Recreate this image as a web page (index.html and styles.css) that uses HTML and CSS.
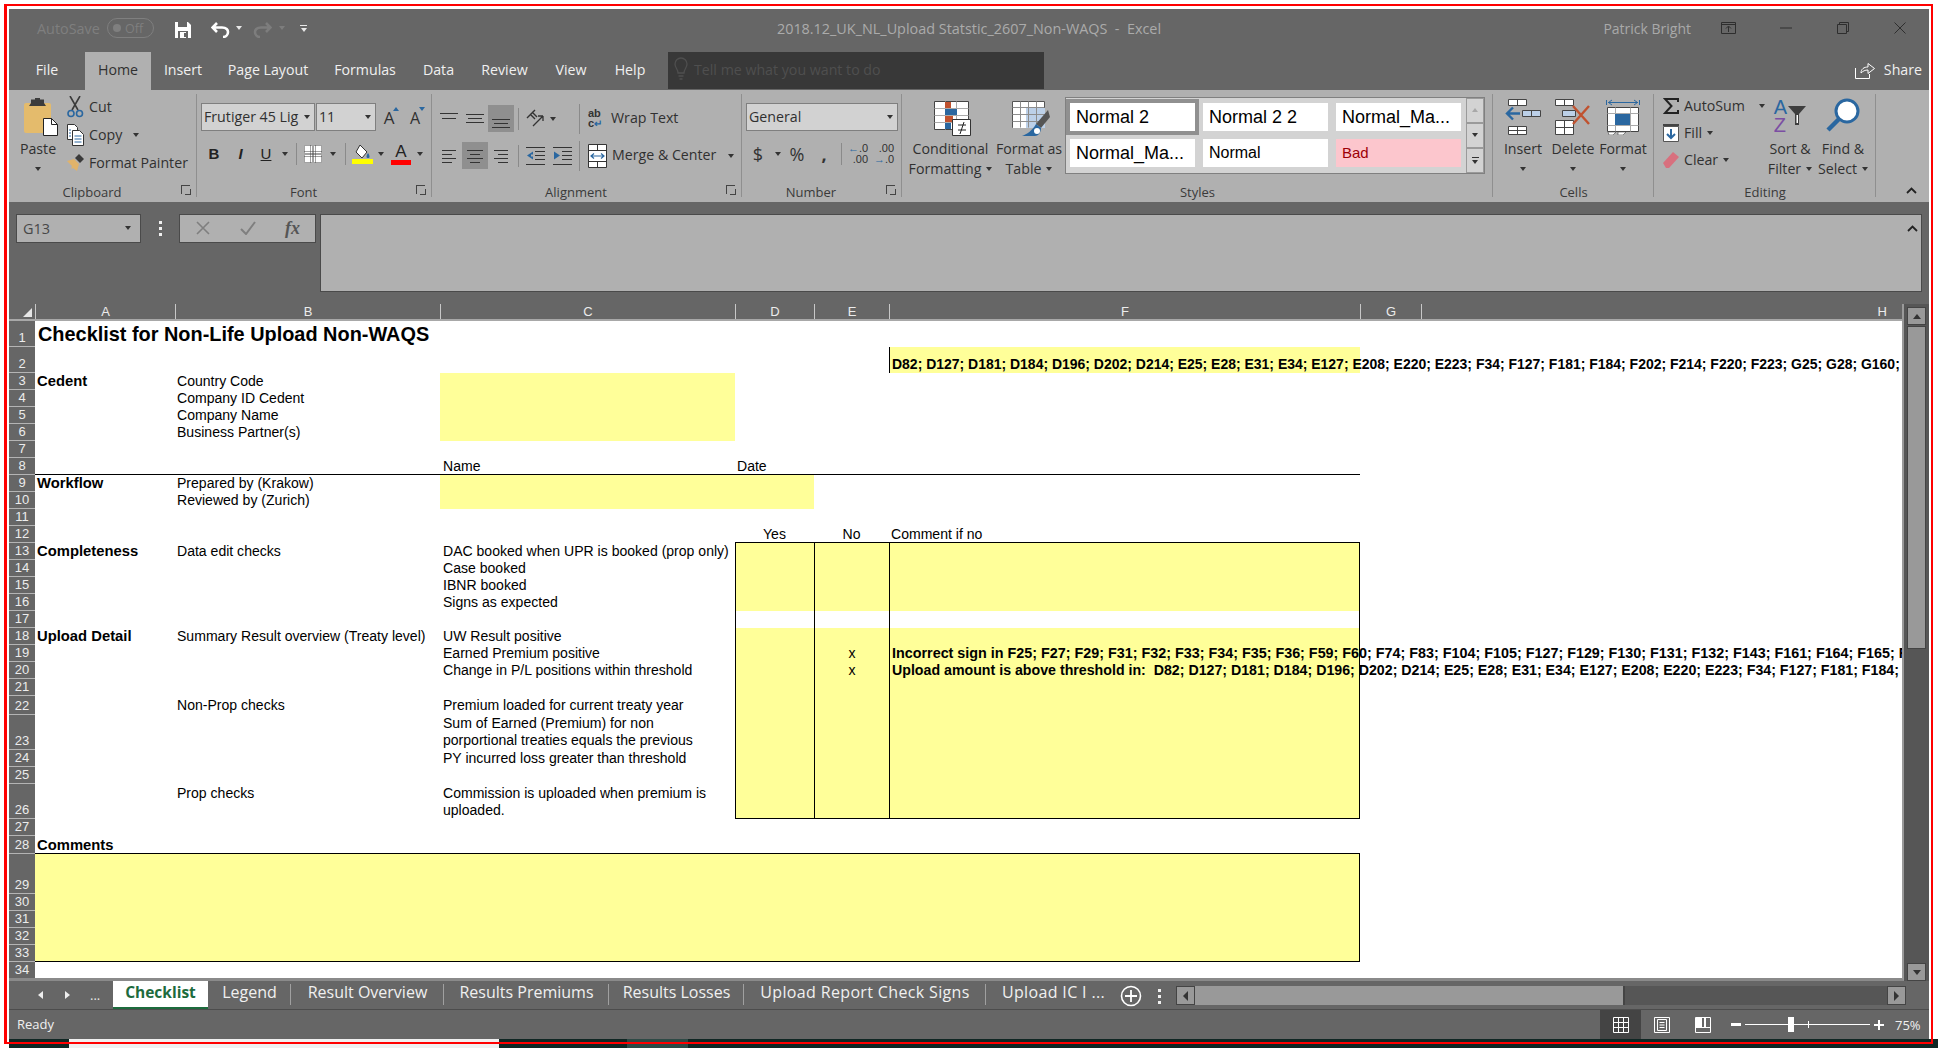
FILE: index.html
```html
<!DOCTYPE html>
<html lang="en">
<head>
<meta charset="UTF-8">
<meta name="viewport" content="width=device-width, initial-scale=1.0">
<title>2018.12_UK_NL_Upload Statstic_2607_Non-WAQS - Excel</title>
<link rel="stylesheet" href="styles.css">
</head>
<body>

<div class="window">

  <!-- title bar -->
  <div class="titlebar">
    <div class="qat">
      <span class="autosave">AutoSave</span>
      <span class="toggle"><i class="toggle-dot"></i>Off</span>
      <svg class="qat-save" width="16" height="16" viewBox="0 0 16 16"><path d="M0 0h13l3 3v13H0z" fill="#fff"/><path d="M3 0h9v5H3z" fill="#666"/><path d="M3 9h10v7H3z" fill="#666"/><path d="M5 10h6v6H5z" fill="#fff"/><path d="M9 11h2v4H9z" fill="#666"/></svg>
      <svg class="qat-undo" width="19" height="16" viewBox="0 0 19 16"><path d="M6 1 1.500 5.500 6 10M2 5.500h9c4.500 0 6 2.500 6 4.500s-1.500 5-5 5" fill="none" stroke="#fff" stroke-width="2.600"/></svg>
      <i class="caret caret-light qat-caret1"></i>
      <svg class="qat-redo" width="19" height="16" viewBox="0 0 19 16"><path d="M13 1l4.500 4.500L13 10M17 5.500H8C3.500 5.500 2 8 2 10s1.500 5 5 5" fill="none" stroke="#7d7d7d" stroke-width="2.600"/></svg>
      <i class="caret caret-dim qat-caret2"></i>
      <span class="qat-more"><i class="bar"></i><i class="caret caret-light"></i></span>
    </div>
    <div class="doc-title">2018.12_UK_NL_Upload Statstic_2607_Non-WAQS &nbsp;-&nbsp; Excel</div>
    <div class="win-controls">
      <span class="user">Patrick Bright</span>
      <svg class="ctl-display" width="15" height="12" viewBox="0 0 15 12"><path d="M.5.500h14v11H.5zM.5 2.500h14M7.500 10V4.500M5 6.500l2.500-2.500L10 6.500" fill="none" stroke="#2e2e2e"/></svg>
      <svg class="ctl-min" width="12" height="12" viewBox="0 0 12 12"><path d="M0 6h12" stroke="#2e2e2e"/></svg>
      <svg class="ctl-max" width="12" height="12" viewBox="0 0 12 12"><path d="M.5 2.500h9v9h-9zM2.500 2.500v-2h9v9h-2" fill="none" stroke="#2e2e2e"/></svg>
      <svg class="ctl-close" width="12" height="12" viewBox="0 0 12 12"><path d="M.5.500l11 11M11.500.500l-11 11" stroke="#2e2e2e"/></svg>
    </div>
  </div>

  <!-- ribbon tabs -->
  <div class="tabrow">
    <div class="ribbon-tabs">
      <span class="rtab">File</span>
      <span class="rtab rtab-active">Home</span>
      <span class="rtab">Insert</span>
      <span class="rtab">Page Layout</span>
      <span class="rtab">Formulas</span>
      <span class="rtab">Data</span>
      <span class="rtab">Review</span>
      <span class="rtab">View</span>
      <span class="rtab">Help</span>
    </div>
    <div class="tellme">
      <svg width="14" height="24" viewBox="0 0 14 24"><path d="M4 16c0-4-3-5-3-9a6 6 0 0 1 12 0c0 4-3 5-3 9zM4.500 19h5M5.500 22h3" fill="none" stroke="#4f4f4f" stroke-width="1.300"/></svg>
      <span>Tell me what you want to do</span>
    </div>
    <div class="share">
      <svg width="20" height="18" viewBox="0 0 20 18"><path d="M.5 7v10.500h14V13M6 12c0-4 3-6 7-6V2.500L19.500 7.500 13 12.500V9c-3 0-5 1-7 3z" fill="none" stroke="#fff"/></svg>
      <span>Share</span>
    </div>
  </div>

  <!-- ribbon -->
  <div class="ribbon">

    <div class="group g-clipboard">
      <div class="group-body clip-body">
        <div class="big paste">
          <div class="big-icon">
            <svg width="35" height="38" viewBox="0 0 35 38"><rect x="1" y="5" width="27" height="30" rx="2" fill="#e4bb6c"/><path d="M8 5V1.500h4V0h5v1.500h4V5l2 3H6z" fill="#3c3c3c"/><path d="M20.500 20.500h8l6 6v11h-14z" fill="#fff" stroke="#222"/><path d="M28.500 20.500v6h6" fill="none" stroke="#222"/></svg>
          </div>
          <span class="paste-label">Paste</span>
          <i class="caret caret-under paste-label"></i>
        </div>
        <div class="clip-rows">
          <div class="clip-row">
            <svg width="17" height="22" viewBox="0 0 17 22"><path d="M3 0l8 14M13 0L5 14" stroke="#3a3a3a" stroke-width="1.600" fill="none"/><circle cx="4" cy="17.500" r="3" fill="none" stroke="#2a67a0" stroke-width="1.600"/><circle cx="12.500" cy="17.500" r="3" fill="none" stroke="#2a67a0" stroke-width="1.600"/></svg>
            <span>Cut</span>
          </div>
          <div class="clip-row">
            <svg width="17" height="22" viewBox="0 0 17 22"><path d="M.5.500h7l3 3v12H.5z" fill="#fff" stroke="#333"/><path d="M5.500 6.500h7l4 4v11h-11z" fill="#fff" stroke="#333"/><path d="M2 6h2M2 9h2M2 12h2M7.500 12h7M7.500 15h7M7.500 18h7" stroke="#2a67a0"/></svg>
            <span>Copy</span><i class="caret copy-caret"></i>
          </div>
          <div class="clip-row">
            <svg width="17" height="18" viewBox="0 0 17 18"><path d="M0 7l7-2 5 5-2 7-4-3-2 1 1-3z" fill="#e1b36a"/><path d="M8 4l4-4 5 5-4 4z" fill="#3a3a3a"/></svg>
            <span>Format Painter</span>
          </div>
        </div>
      </div>
      <div class="group-label has-launcher"><span>Clipboard</span><i class="launcher"></i></div>
    </div>

    <div class="group g-font">
      <div class="group-body two-rows">
        <div class="font-row1">
          <div class="select select-font"><span>Frutiger 45 Lig</span><i class="caret"></i></div>
          <div class="select select-size"><span>11</span><i class="caret"></i></div>
          <span class="font-size-btn">A<i class="tri tri-up"></i></span>
          <span class="font-size-btn font-size-small">A<i class="tri tri-down"></i></span>
        </div>
        <div class="font-row2">
          <b class="fmt fmt-b">B</b>
          <i class="fmt fmt-i">I</i>
          <u class="fmt">U</u>
          <i class="caret"></i>
          <i class="sep"></i>
          <svg width="18" height="18" viewBox="0 0 18 18"><rect width="18" height="18" fill="#fff"/><path d="M.5.500h17v17H.5zM6.500.500v17M11.500.500v17M.5 6.500h17M.5 11.500h17" fill="none" stroke="#444" stroke-dasharray="1 1"/><path d="M9 1v16M1 9h16" stroke="#444"/></svg>
          <i class="caret"></i>
          <i class="sep"></i>
          <svg width="21" height="20" viewBox="0 0 21 20"><path d="M8 1l7 7-5 6-6-6z" fill="#fff" stroke="#333"/><path d="M16 9c2 3 2 5 0 5s-2-2 0-5z" fill="#2a67a0"/><rect y="15" width="21" height="5" fill="#ffff00"/></svg>
          <i class="caret"></i>
          <span class="color-a">A</span>
          <i class="caret"></i>
        </div>
      </div>
      <div class="group-label has-launcher"><span>Font</span><i class="launcher"></i></div>
    </div>

    <div class="group g-align">
      <div class="group-body two-rows">
        <div class="align-row1">
          <span class="al"><svg width="18" height="12" viewBox="0 0 18 12"><path d="M0 .500h18M2 5.500h14" stroke="#333"/></svg></span>
          <span class="al"><svg width="18" height="12" viewBox="0 0 18 12"><path d="M0 1.500h18M2 5.500h14M0 9.500h18" stroke="#333"/></svg></span>
          <span class="al al-on al-bottom"><svg width="18" height="12" viewBox="0 0 18 12"><path d="M0 3.500h18M2 7.500h14M0 11.500h18" stroke="#333"/></svg></span>
          <i class="sep"></i>
          <svg width="19" height="19" viewBox="0 0 19 19"><path d="M1 9l8-8M4 5l5 5M6 3l5 5" stroke="#333" stroke-width="1.400" fill="none"/><path d="M7 17l10-10M17 7v5M17 7h-5" stroke="#333" stroke-width="1.300" fill="none"/></svg>
          <i class="caret"></i>
          <span></span>
          <i class="sep sep-tall"></i>
          <div class="al-wide">
            <span class="wrap-icon"><span>ab</span><span>c<i class="wrap-arrow">↵</i></span></span>
            <span class="al-text">Wrap Text</span>
          </div>
        </div>
        <div class="align-row2">
          <span class="al"><svg width="14" height="14" viewBox="0 0 14 14"><path d="M0 1.500h14M0 5.500h10M0 9.500h14M0 13.500h10" stroke="#333"/></svg></span>
          <span class="al al-on"><svg width="16" height="14" viewBox="0 0 16 14"><path d="M0 1.500h16M3 5.500h10M0 9.500h16M3 13.500h10" stroke="#333"/></svg></span>
          <span class="al"><svg width="14" height="14" viewBox="0 0 14 14"><path d="M0 1.500h14M4 5.500h10M0 9.500h14M4 13.500h10" stroke="#333"/></svg></span>
          <i class="sep"></i>
          <svg width="19" height="18" viewBox="0 0 19 18"><path d="M0 .500h19M0 17.500h19M9 4.500h10M9 8.500h10M9 12.500h10" stroke="#333"/><path d="M7 4.500L1 8.500l6 4zM5 7.500h2v2H5z" fill="#2a67a0"/></svg>
          <svg width="19" height="18" viewBox="0 0 19 18"><path d="M0 .500h19M0 17.500h19M9 4.500h10M9 8.500h10M9 12.500h10" stroke="#333"/><path d="M1 4.500l6 4-6 4z" fill="#2a67a0"/></svg>
          <i class="sep sep-tall"></i>
          <div class="al-wide">
            <svg width="19" height="24" viewBox="0 0 19 24"><path d="M.5.500h18v23H.5z" fill="#fff" stroke="#333"/><path d="M.5 6.500h18M.5 17.500h18M9.500.500v6M9.500 17.500v6" stroke="#333"/><path d="M3 12h13M6 9.500L3 12l3 2.500M13 9.500l3 2.500-3 2.500" fill="none" stroke="#2a67a0" stroke-width="1.200"/></svg>
            <span class="al-text">Merge &amp; Center</span><i class="caret merge-caret"></i>
          </div>
        </div>
      </div>
      <div class="group-label has-launcher"><span>Alignment</span><i class="launcher"></i></div>
    </div>

    <div class="group g-number">
      <div class="group-body two-rows">
        <div class="select select-number"><span>General</span><i class="caret"></i></div>
        <div class="number-row">
          <span class="num-sym">$</span>
          <i class="caret"></i>
          <span class="num-sym">%</span>
          <span class="num-sym num-comma">,</span>
          <i class="sep"></i>
          <span class="dec"><span><em>←</em>.0</span><span>.00</span></span>
          <span class="dec"><span>.00</span><span><em>→</em>.0</span></span>
        </div>
      </div>
      <div class="group-label has-launcher"><span>Number</span><i class="launcher"></i></div>
    </div>

    <div class="group g-styles">
      <div class="group-body styles-body">
        <div class="big big-cond">
          <div class="big-icon">
            <svg width="37" height="35" viewBox="0 0 37 35"><path d="M.5.500h34v28H.500z" fill="#fff" stroke="#444"/><path d="M11.500.500v28M22.500.500v28M.5 7.500h34M.5 14.500h34M.5 21.500h34" stroke="#aaa"/><path d="M11 1h6v6h-6z" fill="#c0522f"/><path d="M11 8h12v6H11z" fill="#2a67a0"/><path d="M11 15h8v6h-8z" fill="#c0522f"/><path d="M11 22h6v6h-6z" fill="#2a67a0"/><path d="M18.500 18.500h18v16h-18z" fill="#fff" stroke="#333"/><path d="M24 24h8M24 29h8M26 33l4-12" stroke="#222" fill="none"/></svg>
          </div>
          <span>Conditional</span>
          <span>Formatting<i class="caret caret-inline"></i></span>
        </div>
        <div class="big big-table">
          <div class="big-icon">
            <svg width="38" height="35" viewBox="0 0 38 35"><path d="M.5.500h32v26H.500z" fill="#fff" stroke="#555"/><path d="M1 7h32v20H1z" fill="#fff"/><path d="M14 7h19v20H14z" fill="#bcd0e8"/><path d="M8.500.500v26M16.500.500v26M24.500.500v26M.5 6.500h32M.5 13.500h32M.5 20.500h32" stroke="#8d8d8d"/><path d="M36 9l2 7-9 11-5-4z" fill="#555"/><path d="M24 23l5 4c0 5-3 8-6 8H10c5-2 10-5 14-12z" fill="#2a67a0"/><circle cx="25" cy="30" r="3" fill="#fff"/></svg>
          </div>
          <span>Format as</span>
          <span>Table<i class="caret caret-inline"></i></span>
        </div>
        <div class="gallery">
          <div class="gallery-grid">
            <div class="style-cell style-selected">Normal 2</div>
            <div class="style-cell">Normal 2 2</div>
            <div class="style-cell">Normal_Ma...</div>
            <div class="style-cell">Normal_Ma...</div>
            <div class="style-cell style-plain">Normal</div>
            <div class="style-cell style-bad">Bad</div>
          </div>
          <div class="gallery-scroll">
            <span class="gal-btn"><i class="tri-gal tri-gal-up"></i></span>
            <span class="gal-btn"><i class="tri-gal"></i></span>
            <span class="gal-btn gal-more"><i class="bar"></i><i class="tri-gal"></i></span>
          </div>
        </div>
      </div>
      <div class="group-label"><span>Styles</span></div>
    </div>

    <div class="group g-cells">
      <div class="group-body cells-body">
        <div class="big big-cell">
          <div class="big-icon">
            <svg width="36" height="36" viewBox="0 0 36 36"><path d="M3.500.500h18v6h-18zM12.500.500v6M3.500 27.500h18v8h-18zM3.500 31.500h18M12.500 27.500v8" fill="#fff" stroke="#444"/><path d="M17.500 11.500h18v6h-18z" fill="#bcd0e8" stroke="#444"/><path d="M26.500 11.500v6" stroke="#444"/><path d="M15 14.500H2M8 8.500l-6 6 6 6" fill="none" stroke="#2a67a0" stroke-width="2.400"/></svg>
          </div>
          <span>Insert</span>
          <i class="caret caret-under"></i>
        </div>
        <div class="big big-cell">
          <div class="big-icon">
            <svg width="36" height="36" viewBox="0 0 36 36"><path d="M.5.500h18v6H.5zM9.500.500v6M.5 21.500h18v14H.500zM.5 28.500h18M9.500 21.500v14" fill="#fff" stroke="#444"/><path d="M7.500 11.500h13v6h-13z" fill="#bcd0e8" stroke="#444"/><path d="M18 7l16 18M34 7L18 25" stroke="#c0522f" stroke-width="2.400"/></svg>
          </div>
          <span>Delete</span>
          <i class="caret caret-under"></i>
        </div>
        <div class="big big-cell">
          <div class="big-icon">
            <svg width="34" height="36" viewBox="0 0 34 36"><path d="M.5 1v5M33.500 1v5M2 3.500h30M6 1l-3.500 2.500L6 6M28 1l3.500 2.500L28 6" fill="none" stroke="#2a67a0"/><path d="M1.500 8.500h31v24h-31z" fill="#fff" stroke="#444"/><path d="M9.500 8.500v24M24.500 8.500v24M1.500 14.500h31M1.500 26.500h31" stroke="#aaa"/><path d="M9 15h15v11H9z" fill="#2a67a0"/><path d="M2 33h8l-3 3H3zM12 33h8l-3 3h-5z" fill="#fff" stroke="#444" stroke-width=".600"/></svg>
          </div>
          <span>Format</span>
          <i class="caret caret-under"></i>
        </div>
      </div>
      <div class="group-label"><span>Cells</span></div>
    </div>

    <div class="group g-editing">
      <div class="group-body editing-body">
        <div class="edit-rows">
          <div class="edit-row">
            <svg width="15" height="16" viewBox="0 0 15 16"><path d="M14.500 4V1H1.500L8 8l-6.500 7h13v-3" fill="none" stroke="#222" stroke-width="2"/></svg>
            <span>AutoSum</span><i class="caret sum-caret"></i>
          </div>
          <div class="edit-row">
            <svg width="16" height="18" viewBox="0 0 16 18"><path d="M0 0h16v2H0z" fill="#444"/><path d="M.5 2.500h15v15H.500z" fill="#fff" stroke="#555"/><path d="M8 5v9M4 10l4 4 4-4" fill="none" stroke="#2a67a0" stroke-width="2"/></svg>
            <span>Fill</span><i class="caret"></i>
          </div>
          <div class="edit-row">
            <svg width="16" height="16" viewBox="0 0 16 16"><path d="M0 11L10 0l6 5-10 11H3z" fill="#d8707e"/></svg>
            <span>Clear</span><i class="caret"></i>
          </div>
        </div>
        <div class="big big-sort">
          <div class="big-icon">
            <div class="sort-icon">
              <span class="sort-az"><span class="sort-a">A</span><span class="sort-z">Z</span></span>
              <svg width="18" height="19" viewBox="0 0 18 19"><path d="M0 0h18L11 8v11H7V8z" fill="#3e3e3e"/><path d="M8.500 9h1.500v8H8.500z" fill="#fff"/></svg>
            </div>
          </div>
          <span>Sort &amp;</span>
          <span>Filter<i class="caret caret-inline"></i></span>
        </div>
        <div class="big big-find">
          <div class="big-icon">
            <svg width="34" height="34" viewBox="0 0 34 34"><circle cx="21" cy="13" r="11" fill="#fff" stroke="#2a67a0" stroke-width="3"/><path d="M13 21L2 32" stroke="#2a67a0" stroke-width="4.500"/></svg>
          </div>
          <span>Find &amp;</span>
          <span>Select<i class="caret caret-inline"></i></span>
        </div>
      </div>
      <div class="group-label"><span>Editing</span></div>
    </div>

    <div class="collapse">
      <svg width="11" height="7" viewBox="0 0 11 7"><path d="M1 6l4.500-4.500L10 6" fill="none" stroke="#222" stroke-width="1.800"/></svg>
    </div>
  </div>

  <!-- formula bar -->
  <div class="formula-bar">
    <div class="name-box"><span>G13</span><i class="caret"></i></div>
    <div class="grip"><i></i><i></i><i></i></div>
    <div class="fx-box">
      <svg width="14" height="14" viewBox="0 0 14 14"><path d="M1 1l12 12M13 1L1 13" stroke="#7f7f7f" stroke-width="1.600"/></svg>
      <svg width="16" height="14" viewBox="0 0 16 14"><path d="M1 8l5 5 9-12" fill="none" stroke="#7f7f7f" stroke-width="2"/></svg>
      <span class="fx">fx</span>
    </div>
    <div class="formula-input">
      <svg width="11" height="7" viewBox="0 0 11 7"><path d="M1 6l4.500-4.500L10 6" fill="none" stroke="#222" stroke-width="1.800"/></svg>
    </div>
  </div>

  <!-- worksheet -->
  <div class="sheet-area">
    <div class="sheet">
      <div class="row col-heads">
        <div class="corner"><i></i></div>
        <div class="ch">A</div><div class="ch">B</div><div class="ch">C</div><div class="ch">D</div>
        <div class="ch">E</div><div class="ch">F</div><div class="ch">G</div><div class="ch ch-h">H</div>
      </div>

      <div class="row h26"><div class="rh">1</div><div class="c ca title-cell">Checklist for Non-Life Upload Non-WAQS</div></div>
      <div class="row h26"><div class="rh">2</div><div class="c cf y bl strong refs">D82; D127; D181; D184; D196; D202; D214; E25; E28; E31; E34; E127; E208; E220; E223; F34; F127; F181; F184; F202; F214; F220; F223; G25; G28; G160; G163; G166; G169</div></div>
      <div class="row"><div class="rh">3</div><div class="c ca strong lab">Cedent</div><div class="c cb">Country Code</div><div class="c cc y"></div></div>
      <div class="row"><div class="rh">4</div><div class="c cb">Company ID Cedent</div><div class="c cc y"></div></div>
      <div class="row"><div class="rh">5</div><div class="c cb">Company Name</div><div class="c cc y"></div></div>
      <div class="row"><div class="rh">6</div><div class="c cb">Business Partner(s)</div><div class="c cc y"></div></div>
      <div class="row"><div class="rh">7</div></div>
      <div class="row"><div class="rh">8</div><div class="c cc r1">Name</div><div class="c cd r1">Date</div><i class="rule"></i></div>
      <div class="row"><div class="rh">9</div><div class="c ca strong lab">Workflow</div><div class="c cb">Prepared by (Krakow)</div><div class="c cc y"></div><div class="c cd y"></div></div>
      <div class="row"><div class="rh">10</div><div class="c cb">Reviewed by (Zurich)</div><div class="c cc y"></div><div class="c cd y"></div></div>
      <div class="row"><div class="rh">11</div></div>
      <div class="row"><div class="rh">12</div><div class="c cd mid">Yes</div><div class="c ce mid">No</div><div class="c cf">Comment if no</div></div>
      <div class="row"><div class="rh">13</div><div class="c ca strong lab">Completeness</div><div class="c cb">Data edit checks</div><div class="c cc">DAC booked when UPR is booked (prop only)</div><div class="c cd y bl bt up"></div><div class="c ce y bl bt up"></div><div class="c cf y bl br bt up"></div></div>
      <div class="row"><div class="rh">14</div><div class="c cc">Case booked</div><div class="c cd y bl"></div><div class="c ce y bl"></div><div class="c cf y bl br"></div></div>
      <div class="row"><div class="rh">15</div><div class="c cc">IBNR booked</div><div class="c cd y bl"></div><div class="c ce y bl"></div><div class="c cf y bl br"></div></div>
      <div class="row"><div class="rh">16</div><div class="c cc">Signs as expected</div><div class="c cd y bl"></div><div class="c ce y bl"></div><div class="c cf y bl br"></div></div>
      <div class="row"><div class="rh">17</div><div class="c cd bl"></div><div class="c ce bl"></div><div class="c cf bl br"></div></div>
      <div class="row"><div class="rh">18</div><div class="c ca strong lab">Upload Detail</div><div class="c cb">Summary Result overview (Treaty level)</div><div class="c cc">UW Result positive</div><div class="c cd y bl"></div><div class="c ce y bl"></div><div class="c cf y bl br"></div></div>
      <div class="row"><div class="rh">19</div><div class="c cc">Earned Premium positive</div><div class="c cd y bl"></div><div class="c ce y bl mid">x</div><div class="c cf y bl br strong">Incorrect sign in F25; F27; F29; F31; F32; F33; F34; F35; F36; F59; F60; F74; F83; F104; F105; F127; F129; F130; F131; F132; F143; F161; F164; F165; F166; F169</div></div>
      <div class="row"><div class="rh">20</div><div class="c cc">Change in P/L positions within threshold</div><div class="c cd y bl"></div><div class="c ce y bl mid">x</div><div class="c cf y bl br strong refs2">Upload amount is above threshold in:&nbsp; D82; D127; D181; D184; D196; D202; D214; E25; E28; E31; E34; E127; E208; E220; E223; F34; F127; F181; F184; F202; F214</div></div>
      <div class="row"><div class="rh">21</div><div class="c cd y bl"></div><div class="c ce y bl"></div><div class="c cf y bl br"></div></div>
      <div class="row h19"><div class="rh">22</div><div class="c cb lift">Non-Prop checks</div><div class="c cc lift">Premium loaded for current treaty year</div><div class="c cd y bl"></div><div class="c ce y bl"></div><div class="c cf y bl br"></div></div>
      <div class="row h35"><div class="rh">23</div><div class="c cc lift">Sum of Earned (Premium) for non<br>porportional treaties equals the previous</div><div class="c cd y bl"></div><div class="c ce y bl"></div><div class="c cf y bl br"></div></div>
      <div class="row"><div class="rh">24</div><div class="c cc">PY incurred loss greater than threshold</div><div class="c cd y bl"></div><div class="c ce y bl"></div><div class="c cf y bl br"></div></div>
      <div class="row"><div class="rh">25</div><div class="c cd y bl"></div><div class="c ce y bl"></div><div class="c cf y bl br"></div></div>
      <div class="row h35"><div class="rh">26</div><div class="c cb top">Prop checks</div><div class="c cc">Commission is uploaded when premium is<br>uploaded.</div><div class="c cd y bl bb"></div><div class="c ce y bl bb"></div><div class="c cf y bl br bb"></div></div>
      <div class="row"><div class="rh">27</div></div>
      <div class="row h18"><div class="rh">28</div><div class="c ca strong lab">Comments</div></div>
      <div class="row h40"><div class="rh">29</div><div class="c comment y bt br up"></div></div>
      <div class="row"><div class="rh">30</div><div class="c comment y br"></div></div>
      <div class="row"><div class="rh">31</div><div class="c comment y br"></div></div>
      <div class="row"><div class="rh">32</div><div class="c comment y br"></div></div>
      <div class="row"><div class="rh">33</div><div class="c comment y br bb"></div></div>
      <div class="row"><div class="rh">34</div></div>
    </div>
    <div class="vscroll">
      <span class="sb-btn"><i class="tri-sb"></i></span>
      <span class="sb-thumb"></span>
      <span class="sb-btn sb-down"><i class="tri-sb tri-sb-down"></i></span>
    </div>
  </div>

  <!-- sheet tabs and horizontal scrollbar -->
  <div class="sheet-tabs">
    <div class="tab-nav">
      <i class="tab-arrow tab-arrow-left"></i>
      <i class="tab-arrow tab-arrow-right"></i>
      <span>...</span>
    </div>
    <div class="tab-list">
      <span class="stab stab-active">Checklist</span>
      <span class="stab">Legend</span>
      <span class="stab">Result Overview</span>
      <span class="stab">Results Premiums</span>
      <span class="stab">Results Losses</span>
      <span class="stab stab-wide">Upload Report Check Signs</span>
      <span class="stab stab-last stab-wide">Upload IC I ...</span>
    </div>
    <svg class="add-sheet" width="22" height="22" viewBox="0 0 22 22"><circle cx="11" cy="11" r="9.500" fill="none" stroke="#fff" stroke-width="1.600"/><path d="M11 5v12M5 11h12" stroke="#fff" stroke-width="1.800"/></svg>
    <div class="grip grip-tabs"><i></i><i></i><i></i></div>
    <div class="hscroll">
      <span class="hs-btn"><i class="tri-hs tri-hs-left"></i></span>
      <span class="hs-thumb"></span>
      <span class="hs-btn"><i class="tri-hs tri-hs-right"></i></span>
    </div>
  </div>

  <!-- status bar -->
  <div class="statusbar">
    <span class="ready">Ready</span>
    <div class="views">
      <span class="view view-on"><svg width="16" height="16" viewBox="0 0 16 16"><path d="M.5.500h15v15H.500zM5.500.500v15M10.500.500v15M.5 5.500h15M.5 10.500h15" fill="none" stroke="#fff"/></svg></span>
      <span class="view"><svg width="16" height="16" viewBox="0 0 16 16"><path d="M.5.500h15v15H.500zM3.500 2.500h9v11h-9zM5.500 5.500h5M5.500 8h5M5.500 10.500h5" fill="none" stroke="#fff"/></svg></span>
      <span class="view"><svg width="16" height="16" viewBox="0 0 16 16"><path d="M.5.500h15v15H.500z" fill="none" stroke="#fff"/><path d="M1 1h6v9H1zM9 1h2v9H9z" fill="#fff"/><path d="M.5 10.500h15" stroke="#fff"/></svg></span>
    </div>
    <div class="zoom">
      <i class="zoom-minus"></i>
      <div class="zoom-track"><i class="zoom-tick"></i><i class="zoom-thumb"></i></div>
      <i class="zoom-plus"></i>
      <span class="zoom-pct">75%</span>
    </div>
  </div>
</div>

<div class="taskbar">
  <i class="task task-dark"></i>
  <i class="task task-light"></i>
  <i class="task task-dark2"></i>
  <i class="task task-mid"></i>
  <i class="task task-rest"></i>
</div>

<div class="red-frame"></div>

</body>
</html>
```

FILE: styles.css
```css
* {
  box-sizing: border-box;
}

body {
  margin: 0;
  width: 1938px;
  height: 1048px;
  overflow: hidden;
  position: relative;
  background-color: #fff;
  font-family: "Open Sans", "Noto Sans", sans-serif;
  color: #303030;
}

i {
  font-style: normal;
}

.window {
  margin: 9px 0 0 9px;
  width: 1920px;
  height: 1030px;
  background-color: #666;
  display: flex;
  flex-direction: column;
}

/* bits used all over the ribbon */
.caret {
  display: block;
  width: 0;
  height: 0;
  border-left: 3.5px solid transparent;
  border-right: 3.5px solid transparent;
  border-top: 4px solid #333;
  justify-self: center;
}

.caret-light { border-top-color: #e8e8e8; }
.caret-dim { border-top-color: #7d7d7d; }

.caret-inline {
  display: inline-block;
  margin-left: 5px;
  vertical-align: 3px;
}

.caret-under {
  margin-top: 8px;
}

.sep {
  display: block;
  width: 1px;
  height: 22px;
  background-color: #8a8a8a;
  justify-self: center;
  align-self: center;
}

.sep-tall {
  height: 30px;
}

/* title bar */
.titlebar {
  height: 43px;
  display: grid;
  grid-template-columns: 1fr auto 1fr;
  align-items: center;
  padding-bottom: 4px;
  font-size: 14.4px;
}

.qat {
  display: flex;
  align-items: center;
  padding-left: 28px;
  color: #7f7f7f;
}

.qat svg {
  margin-top: 3px;
}

.autosave {
  width: 63px;
}

.toggle {
  width: 47px;
  height: 20px;
  margin-left: 7px;
  border: 1px solid #7f7f7f;
  border-radius: 10px;
  display: flex;
  align-items: center;
  font-size: 12.5px;
  padding-left: 5px;
  gap: 4px;
}

.toggle-dot {
  width: 8px;
  height: 8px;
  border-radius: 50%;
  background-color: #7f7f7f;
}

.qat-save { margin-left: 21px; }
.qat-undo { margin-left: 20px; }
.qat-caret1 { margin-left: 6px; }
.qat-redo { margin-left: 11px; }
.qat-caret2 { margin-left: 7px; }

.qat-more {
  margin-left: 15px;
  display: flex;
  flex-direction: column;
  align-items: center;
  gap: 2px;
}

.bar {
  display: block;
  width: 7px;
  height: 1px;
  background-color: #e8e8e8;
}

.doc-title {
  color: #ababab;
  font-size: 14.4px;
  white-space: nowrap;
}

.win-controls {
  display: flex;
  align-items: center;
  justify-content: flex-end;
  padding-right: 23px;
  color: #a9a9a9;
}

.user {
  font-size: 14px;
}

.ctl-display { margin-left: 30px; }
.ctl-min { margin-left: 44px; }
.ctl-max { margin-left: 45px; }
.ctl-close { margin-left: 45px; }

/* ribbon tabs */
.tabrow {
  height: 38px;
  display: flex;
  font-size: 14.2px;
}

.ribbon-tabs {
  display: grid;
  grid-template-columns: 76px 66px 64px 106px 88px 59px 73px 60px 58px;
  width: 650px;
}

.rtab {
  display: flex;
  align-items: center;
  justify-content: center;
  padding-bottom: 2px;
  color: #f0f0f0;
}

.rtab-active {
  background-color: #b0b0b0;
  color: #303030;
}

.tellme {
  margin: 0 0 1px 9px;
  width: 376px;
  background-color: #383838;
  color: #4f4f4f;
  display: flex;
  align-items: center;
  padding: 0 0 2px 6px;
  gap: 6px;
}

.share {
  margin-left: auto;
  padding: 0 7px 2px 0;
  display: flex;
  align-items: center;
  gap: 9px;
  color: #f0f0f0;
}

/* ribbon */
.ribbon {
  height: 112px;
  background-color: #b0b0b0;
  display: flex;
  font-size: 14.2px;
  line-height: 20px;
}

.group {
  display: flex;
  flex-direction: column;
  position: relative;
}

.group::after {
  content: "";
  position: absolute;
  right: 0;
  top: 4px;
  bottom: 5px;
  width: 1px;
  background-color: #8f8f8f;
}

.g-clipboard { width: 188px; }
.g-font { width: 235px; }
.g-align { width: 310px; }
.g-number { width: 160px; }
.g-styles { width: 591px; }
.g-cells { width: 161px; }
.g-editing { width: 222px; }

.group-body {
  height: 92px;
  display: flex;
}

.group-label {
  height: 20px;
  font-size: 13px;
  color: #3a3a3a;
  text-align: center;
  position: relative;
}

.has-launcher {
  padding-right: 22px;
}

.launcher {
  position: absolute;
  right: 7px;
  top: 3px;
  width: 9px;
  height: 9px;
  border-left: 1px solid #444;
  border-top: 1px solid #444;
}

.launcher::after {
  content: "";
  position: absolute;
  right: -1px;
  bottom: -1px;
  width: 5px;
  height: 5px;
  border-right: 1px solid #444;
  border-bottom: 1px solid #444;
}

.big {
  display: flex;
  flex-direction: column;
  align-items: center;
  padding-top: 8px;
  white-space: nowrap;
}

.big-icon {
  height: 41px;
  display: flex;
  align-items: flex-start;
  justify-content: center;
}

/* clipboard */
.clip-body {
  padding-left: 14px;
}

.paste {
  width: 35px;
}

.paste-label {
  margin-right: 5px;
}

.clip-rows {
  margin: 3px 0 0 9px;
}

.clip-row {
  height: 28px;
  display: flex;
  align-items: center;
  gap: 5px;
  white-space: nowrap;
}

.clip-row svg {
  width: 17px;
  flex-shrink: 0;
}

.copy-caret {
  margin-left: 6px;
}

/* font */
.two-rows {
  flex-direction: column;
  padding: 13px 0 0 4px;
  gap: 10px;
}

.font-row1 {
  display: flex;
  height: 28px;
  align-items: stretch;
}

.select {
  height: 28px;
  background-color: #d2d2d2;
  border: 1px solid #7f7f7f;
  display: flex;
  align-items: center;
  justify-content: space-between;
  padding: 0 4px 0 2px;
  white-space: nowrap;
}

.select-font { width: 114px; }
.select-size { width: 60px; margin-left: 1px; }
.select-number { width: 152px; }

.font-size-btn {
  width: 26px;
  font-size: 17px;
  line-height: 30px;
  text-align: center;
  position: relative;
}

.font-size-small {
  font-size: 16px;
}

.tri {
  position: absolute;
  top: 4px;
  right: 3px;
  border-left: 3px solid transparent;
  border-right: 3px solid transparent;
}

.tri-up { border-bottom: 4px solid #2a67a0; }
.tri-down { border-top: 4px solid #2a67a0; }

.font-row2 {
  display: grid;
  grid-template-columns: 26px 27px 24px 14px 8px 26px 14px 10px 24px 14px 26px 12px;
  height: 27px;
  align-items: center;
  justify-items: center;
}

.fmt {
  font-family: "Liberation Sans", sans-serif;
  font-size: 15px;
  color: #222;
}

.fmt-b { font-weight: 700; }
.fmt-i { font-style: italic; font-weight: 700; }

.color-a {
  font-family: "Liberation Sans", sans-serif;
  font-size: 17px;
  line-height: 17px;
  width: 20px;
  height: 22px;
  text-align: center;
  color: #222;
  border-bottom: 5px solid #f00;
}

/* alignment */
.g-align .two-rows {
  padding: 14px 0 0 4px;
}

.align-row1,
.align-row2 {
  display: grid;
  height: 27px;
  align-items: center;
  justify-items: center;
}

.align-row1 { grid-template-columns: 26px 26px 26px 8px 27px 8px 18px 8px auto; }
.align-row2 { grid-template-columns: 26px 26px 26px 8px 27px 26px 8px auto; }

.al {
  width: 26px;
  height: 27px;
  display: flex;
  align-items: center;
  justify-content: center;
}

.al-on {
  background-color: #8f8f8f;
}

.al-bottom {
  align-items: flex-end;
  padding-bottom: 4px;
}

.al-wide {
  justify-self: start;
  display: flex;
  align-items: center;
  gap: 5px;
  padding-left: 5px;
  white-space: nowrap;
}

.al-text {
  margin-top: -1px;
}

.wrap-icon {
  width: 18px;
  display: flex;
  flex-direction: column;
  font-family: "Liberation Sans", sans-serif;
  font-size: 11px;
  line-height: 10px;
  font-weight: 700;
  color: #333;
}

.wrap-arrow {
  color: #2a67a0;
  font-size: 10px;
}

.merge-caret {
  margin-left: 7px;
}

/* number */
.number-row {
  display: grid;
  grid-template-columns: 24px 16px 22px 32px 3px 30px 22px;
  height: 27px;
  align-items: center;
  justify-items: center;
}

.num-sym {
  font-size: 18px;
  color: #333;
}

.num-comma {
  font-weight: 700;
  line-height: 14px;
}

.dec {
  display: flex;
  flex-direction: column;
  font-size: 11px;
  line-height: 11px;
  font-family: "Liberation Sans", sans-serif;
  text-align: right;
}

.dec em {
  font-style: normal;
  color: #2a67a0;
  font-weight: 700;
}

/* styles */
.styles-body {
  padding-left: 9px;
}

.big-cond { width: 77px; margin-left: 1px; }
.big-table { width: 64px; margin-left: 8px; }

.big-cond .big-icon,
.big-table .big-icon {
  padding: 3px 0 0 3px;
}

.gallery {
  margin: 7px 0 0 4px;
  width: 420px;
  height: 77px;
  background-color: #d3d3d3;
  border: 1px solid #808080;
  display: flex;
  padding: 5px 0 0 4px;
}

.gallery-grid {
  display: grid;
  grid-template-columns: 125px 125px 125px;
  grid-template-rows: 28px 28px;
  gap: 8px;
  width: 391px;
  margin-right: 5px;
}

.style-cell {
  background-color: #fff;
  color: #000;
  font-family: "Liberation Sans", sans-serif;
  font-size: 18px;
  line-height: 28px;
  padding-left: 6px;
  white-space: nowrap;
  overflow: hidden;
}

.style-selected {
  outline: 4px solid #909090;
}

.style-plain {
  font-size: 16px;
}

.style-bad {
  background-color: #fcc6cd;
  color: #9c0006;
  font-size: 15px;
}

.gallery-scroll {
  width: 18px;
  margin-top: -5px;
  display: flex;
  flex-direction: column;
}

.gal-btn {
  flex: 1;
  border: 1px solid #9a9a9a;
  background-color: #d3d3d3;
  display: flex;
  flex-direction: column;
  align-items: center;
  justify-content: center;
  gap: 2px;
}

.gal-more .bar {
  background-color: #333;
}

.tri-gal {
  border-left: 3.500px solid transparent;
  border-right: 3.500px solid transparent;
  border-top: 4px solid #333;
}

.tri-gal-up {
  border-top: 0;
  border-bottom: 4px solid #a8a8a8;
}

/* cells */
.cells-body {
  padding-left: 5px;
}

.big-cell {
  width: 50px;
}

.big-cell .big-icon {
  margin-top: 1px;
  height: 40px;
}

/* editing */
.editing-body {
  padding-left: 9px;
}

.edit-rows {
  width: 97px;
  padding-top: 3px;
}

.edit-row {
  height: 27px;
  display: flex;
  align-items: center;
  gap: 5px;
  white-space: nowrap;
}

.edit-row svg {
  width: 16px;
  flex-shrink: 0;
}

.sum-caret {
  margin-left: 9px;
}

.big-sort { width: 60px; }
.big-find { width: 46px; }

.sort-icon {
  display: flex;
  align-items: flex-start;
  gap: 1px;
}

.sort-icon svg {
  margin-top: 8px;
}

.sort-az {
  display: flex;
  flex-direction: column;
  font-family: "Liberation Sans", sans-serif;
  font-size: 20px;
  line-height: 18px;
}

.sort-a { color: #2a67a0; }
.sort-z { color: #7b4ea3; }

.collapse {
  flex: 1;
  display: flex;
  align-items: flex-end;
  justify-content: center;
  padding: 0 0 8px 18px;
}

/* formula bar */
.formula-bar {
  height: 103px;
  display: flex;
  align-items: flex-start;
  padding: 12px 7px 0 7px;
}

.name-box {
  width: 125px;
  height: 29px;
  background-color: #b0b0b0;
  border: 1px solid #4a4a4a;
  display: flex;
  align-items: center;
  justify-content: space-between;
  padding: 0 9px 0 6px;
  font-size: 14.5px;
  color: #484848;
}

.grip {
  width: 38px;
  height: 29px;
  display: flex;
  flex-direction: column;
  align-items: center;
  justify-content: center;
  gap: 3px;
}

.grip i {
  width: 3px;
  height: 3px;
  background-color: #f0f0f0;
}

.fx-box {
  width: 137px;
  height: 29px;
  background-color: #b0b0b0;
  border: 1px solid #4a4a4a;
  display: flex;
  align-items: center;
  justify-content: space-between;
  padding: 0 15px 0 16px;
}

.fx {
  font-family: "Liberation Serif", serif;
  font-style: italic;
  font-weight: 700;
  font-size: 18px;
  color: #555;
}

.formula-input {
  margin-left: 4px;
  width: 1602px;
  height: 78px;
  background-color: #b0b0b0;
  border: 1px solid #4a4a4a;
  display: flex;
  justify-content: flex-end;
  padding: 10px 3px 0 0;
}

/* worksheet */
.sheet-area {
  height: 677px;
  display: flex;
}

.sheet {
  width: 1895px;
  overflow: hidden;
  background-color: #fff;
  border-right: 2px solid #9a9a9a;
  border-bottom: 3px solid #8a8a8a;
  font-family: "Liberation Sans", sans-serif;
  font-size: 14.05px;
  line-height: 17px;
  color: #000;
}

.row {
  display: grid;
  grid-template-columns: 26px 140px 265px 295px 79px 75px 471px 61px 482px;
  height: 17px;
}

.h18 { height: 18px; }
.h19 { height: 19px; }
.h26 { height: 26px; }
.h35 { height: 35px; }
.h40 { height: 40px; }

.col-heads {
  background-color: #666;
  color: #ececec;
  font-size: 13px;
  border-bottom: 2px solid #a8a8a8;
}

.corner {
  grid-column: 1;
  position: relative;
}

.corner i {
  position: absolute;
  right: 3px;
  bottom: 2px;
  border-left: 9px solid transparent;
  border-bottom: 9px solid #e6e6e6;
}

.ch {
  text-align: center;
  border-left: 1px solid #c8c8c8;
  line-height: 15px;
}

.ch-h {
  text-align: right;
  padding-right: 16px;
}

.rh {
  grid-column: 1;
  grid-row: 1;
  background-color: #666;
  color: #ececec;
  font-size: 13px;
  border-bottom: 1px solid #b4b4b4;
  display: flex;
  align-items: flex-end;
  justify-content: center;
  line-height: 16px;
}

.c {
  display: flex;
  align-items: flex-end;
  padding-left: 2px;
  white-space: nowrap;
}

.ca { grid-column: 2; }
.cb { grid-column: 3; }
.cc { grid-column: 4; padding-left: 3px; display: block; align-self: end; }
.cd { grid-column: 5; }
.ce { grid-column: 6; }
.cf { grid-column: 7; }

.cc.y {
  align-self: stretch;
}

.comment { grid-column: 2 / 8; }

/* the line under row 8, it runs over several columns */
.rule {
  grid-column: 2 / 8;
  grid-row: 1;
  align-self: end;
  height: 1px;
  background-color: #000;
}

.r1 { grid-row: 1; }
.top { align-items: flex-start; padding-top: 1px; }
.mid { justify-content: center; padding-left: 0; }
.lift { margin-bottom: 1px; }
.up { margin-top: -1px; }

.y { background-color: #ffff99; }
.bl { border-left: 1px solid #000; }
.br { border-right: 1px solid #000; }
.bt { border-top: 1px solid #000; }
.bb { border-bottom: 1px solid #000; }

.strong { font-weight: 700; font-size: 14.35px; }
.lab { font-size: 14.8px; }
.refs { font-size: 13.97px; }
.refs2 { font-size: 14.2px; }

.title-cell {
  font-weight: 700;
  font-size: 19.9px;
  line-height: 26px;
  padding-left: 3px;
}

.vscroll {
  width: 25px;
  padding: 3px 3px 0 3px;
  background-color: #565656;
  display: flex;
  flex-direction: column;
  position: relative;
}

.sb-btn {
  width: 19px;
  height: 18px;
  background-color: #999;
  border: 1px solid #444;
  display: flex;
  align-items: center;
  justify-content: center;
  flex-shrink: 0;
}

.sb-thumb {
  width: 19px;
  height: 323px;
  margin-top: 1px;
  background-color: #999;
  border: 1px solid #444;
}

.sb-down {
  margin-top: auto;
}

.tri-sb {
  border-left: 4px solid transparent;
  border-right: 4px solid transparent;
  border-bottom: 5px solid #333;
}

.tri-sb-down {
  border-bottom: 0;
  border-top: 5px solid #333;
}

/* sheet tabs */
.sheet-tabs {
  height: 29px;
  display: flex;
  align-items: stretch;
  border-bottom: 1px solid #4c4c4c;
  position: relative;
}

.tab-nav {
  width: 104px;
  display: flex;
  align-items: center;
  padding-left: 29px;
  color: #e8e8e8;
  font-size: 13px;
}

.tab-nav span {
  margin-left: 20px;
}

.tab-arrow {
  width: 0;
  height: 0;
  border-top: 4px solid transparent;
  border-bottom: 4px solid transparent;
}

.tab-arrow-left { border-right: 5px solid #eee; }
.tab-arrow-right { border-left: 5px solid #eee; margin-left: 22px; }

.tab-list {
  display: grid;
  grid-template-columns: 95px 83px 153px 165px 135px 242px 135px;
  width: 1008px;
}

.stab {
  font-size: 16px;
  color: #f0f0f0;
  display: flex;
  align-items: center;
  justify-content: center;
  white-space: nowrap;
  position: relative;
  padding-bottom: 6px;
}

.stab-wide {
  letter-spacing: 0.35px;
}

.stab::after {
  content: "";
  position: absolute;
  right: 0;
  top: 3px;
  bottom: 4px;
  width: 1px;
  background-color: #a0a0a0;
}

.stab-last::after,
.stab-active::after {
  display: none;
}

.stab-active {
  background-color: #fff;
  color: #1d6b3d;
  font-size: 15.5px;
  font-weight: 700;
  border-bottom: 2px solid #1d6b3d;
  padding-bottom: 4px;
}

.add-sheet {
  margin: 4px 0 0 -1px;
}

.grip-tabs {
  width: 34px;
  height: 24px;
  margin-top: 3px;
}

.hscroll {
  width: 730px;
  height: 19px;
  margin-top: 5px;
  background-color: #565656;
  display: flex;
}

.hs-btn {
  width: 19px;
  background-color: #999;
  border: 1px solid #444;
  display: flex;
  align-items: center;
  justify-content: center;
}

.hs-thumb {
  width: 430px;
  background-color: #999;
  border-right: 2px solid #444;
  margin-right: auto;
}

.tri-hs {
  border-top: 5px solid transparent;
  border-bottom: 5px solid transparent;
}

.tri-hs-left { border-right: 5px solid #333; }
.tri-hs-right { border-left: 5px solid #333; }

/* status bar */
.statusbar {
  flex: 1;
  display: flex;
  align-items: stretch;
  color: #f0f0f0;
  font-size: 13px;
}

.ready {
  padding-left: 8px;
  line-height: 29px;
}

.views {
  margin-left: auto;
  display: flex;
}

.view {
  width: 41px;
  display: flex;
  align-items: center;
  justify-content: center;
}

.view-on {
  background-color: #444;
}

.zoom {
  width: 206px;
  display: flex;
  align-items: center;
  padding-left: 8px;
}

.zoom-minus {
  width: 10px;
  height: 3px;
  background-color: #fff;
}

.zoom-track {
  margin-left: 4px;
  width: 125px;
  height: 1px;
  background-color: #fff;
  position: relative;
}

.zoom-thumb {
  position: absolute;
  left: 43px;
  top: -7px;
  width: 6px;
  height: 15px;
  background-color: #fff;
}

.zoom-tick {
  position: absolute;
  left: 63px;
  top: -3px;
  width: 1px;
  height: 7px;
  background-color: #fff;
}

.zoom-plus {
  margin-left: 4px;
  width: 10px;
  height: 10px;
  background:
    linear-gradient(#fff, #fff) center / 10px 2px no-repeat,
    linear-gradient(#fff, #fff) center / 2px 10px no-repeat;
}

.zoom-pct {
  margin-left: 11px;
  font-size: 13px;
}

/* what shows of the desktop under the window */
.taskbar {
  margin-left: 9px;
  width: 1929px;
  height: 9px;
  display: flex;
}

.task-dark { width: 60px; background-color: #0f2623; }
.task-light { width: 430px; background-color: #f0f0f0; }
.task-dark2 { width: 128px; background-color: #0f2623; }
.task-mid { width: 61px; background-color: #2e4a46; }
.task-rest { flex: 1; background-color: #0f2623; }

/* red marker round the window, drawn over everything */
.red-frame {
  position: absolute;
  left: 4px;
  top: 4px;
  width: 1929px;
  height: 1040px;
  border: solid #f00;
  border-width: 2px 2px 2px 3px;
}
```
